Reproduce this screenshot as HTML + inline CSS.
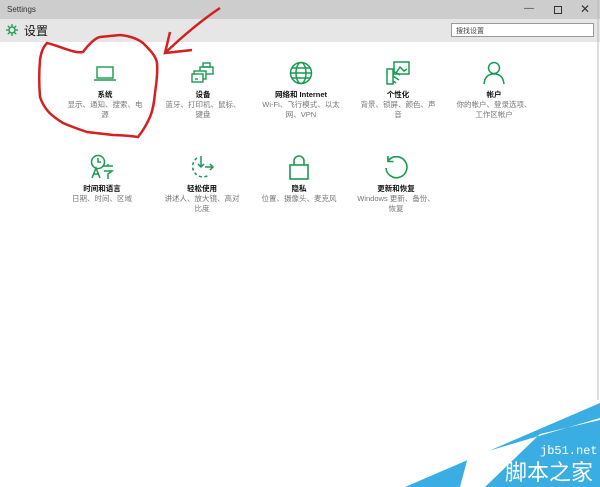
<!DOCTYPE html>
<html><head><meta charset="utf-8"><style>
*{margin:0;padding:0;box-sizing:border-box}
body{width:600px;height:487px;overflow:hidden;background:#fff;font-family:"Liberation Sans","Noto Sans CJK SC",sans-serif;position:relative}
.tb{position:absolute;left:0;top:0;width:600px;height:19px;background:#cdcdcd;font-size:8px;color:#333}
.hb{position:absolute;left:0;top:19px;width:600px;height:23px;background:#e6e6e6}
.tile{position:absolute;width:96px;text-align:center}
.tile svg{display:block;margin:0 auto}
.t{font-size:7.5px;color:#111;margin-top:6px;font-weight:bold}
.d{font-size:7.5px;color:#777;line-height:10px;width:78px;margin:0 auto}
</style></head><body>
<div class="tb"><span style="position:absolute;left:7px;top:5px">Settings</span>
<span style="position:absolute;left:524px;top:3px;font-size:10px;color:#444">—</span>
<div style="position:absolute;left:554px;top:6px;width:8px;height:8px;border:1px solid #333"></div>
<span style="position:absolute;left:580px;top:2px;font-size:12px;color:#333">✕</span></div>
<div class="hb">
<svg style="position:absolute;left:6px;top:5px" width="12" height="12" viewBox="0 0 12 12"><circle cx="6" cy="6" r="3" fill="none" stroke="#1a9a50" stroke-width="1.3"/><g stroke="#1a9a50" stroke-width="1.3"><line x1="6" y1="0" x2="6" y2="2.5"/><line x1="6" y1="9.5" x2="6" y2="12"/><line x1="0" y1="6" x2="2.5" y2="6"/><line x1="9.5" y1="6" x2="12" y2="6"/><line x1="1.8" y1="1.8" x2="3.5" y2="3.5"/><line x1="8.5" y1="8.5" x2="10.2" y2="10.2"/><line x1="1.8" y1="10.2" x2="3.5" y2="8.5"/><line x1="8.5" y1="3.5" x2="10.2" y2="1.8"/></g></svg>
<span style="position:absolute;left:24px;top:3px;font-size:12px;color:#111">设置</span>
<div style="position:absolute;left:451px;top:4px;width:143px;height:14px;background:#fff;border:1px solid #999;font-size:7px;color:#444;padding:2px 4px">搜找设置</div>
</div>

<div class="tile" style="left:57px;top:63px"><svg width="24" height="22" viewBox="0 0 24 22"><rect x="4" y="4" width="16" height="11" fill="none" stroke="#1a9a50" stroke-width="1.4"/><line x1="1" y1="17" x2="23" y2="17" stroke="#1a9a50" stroke-width="1.6"/></svg><div class="t" style="margin-top:4px">系统</div><div class="d">显示、通知、搜索、电源</div></div>
<div class="tile" style="left:155px;top:62px"><svg width="24" height="22" viewBox="0 0 24 22" fill="none" stroke="#1a9a50" stroke-width="1.4"><rect x="12" y="1" width="7" height="4"/><rect x="9" y="5" width="13" height="7"/><rect x="3" y="9" width="12" height="8" fill="#fff"/><rect x="1" y="12" width="11" height="8" fill="#fff"/><line x1="4" y1="17" x2="7" y2="17"/></svg><div class="t" style="margin-top:5px">设备</div><div class="d">蓝牙、打印机、鼠标、键盘</div></div>
<div class="tile" style="left:253px;top:61px"><svg width="24" height="24" viewBox="0 0 24 24" fill="none" stroke="#1a9a50" stroke-width="1.5"><circle cx="12" cy="12" r="10.5"/><ellipse cx="12" cy="12" rx="5" ry="10.5"/><line x1="1.5" y1="12" x2="22.5" y2="12"/><line x1="3" y1="7" x2="21" y2="7"/><line x1="3" y1="17" x2="21" y2="17"/></svg><div class="t" style="margin-top:4px">网络和 Internet</div><div class="d">Wi-Fi、飞行模式、以太网、VPN</div></div>
<div class="tile" style="left:350px;top:61px"><svg width="24" height="24" viewBox="0 0 24 24" fill="none" stroke="#1a9a50" stroke-width="1.5"><rect x="8" y="1" width="15" height="12"/><path d="M10 12 L14 6 L18 10 L21 8"/><rect x="1" y="8" width="6" height="15"/><path d="M7 10 L14 14 M7 15 L13 19 M7 20 L10 22"/></svg><div class="t" style="margin-top:4px">个性化</div><div class="d">背景、锁屏、颜色、声音</div></div>
<div class="tile" style="left:446px;top:61px"><svg width="24" height="24" viewBox="0 0 24 24" fill="none" stroke="#1a9a50" stroke-width="1.5"><circle cx="12" cy="7" r="5.5"/><path d="M2 23 Q3 13 12 13 Q21 13 22 23"/></svg><div class="t" style="margin-top:4px">帐户</div><div class="d">你的帐户、登录选项、工作区帐户</div></div>

<div class="tile" style="left:54px;top:154px"><svg width="26" height="26" viewBox="0 0 26 26" fill="none" stroke="#1a9a50" stroke-width="1.5"><circle cx="9" cy="8" r="6.5"/><path d="M9 4 V8 H12"/><path d="M3 24 L7 14 L11 24 M4.5 20 H9.5"/><path d="M14 12 H24 M19 10 V12 M15 17 H23 L19 20 V25"/></svg><div class="t" style="margin-top:3px">时间和语言</div><div class="d">日期、时间、区域</div></div>
<div class="tile" style="left:154px;top:155px"><svg width="26" height="24" viewBox="0 0 26 24" fill="none" stroke="#1a9a50" stroke-width="1.5"><path d="M8 3 A10 10 0 1 0 20 20" stroke-dasharray="3 2.5"/><path d="M12 1 V12 M9 9 L12 12 L15 9"/><path d="M16 12 H24 M21 9 L24 12 L21 15"/></svg><div class="t" style="margin-top:4px">轻松使用</div><div class="d">讲述人、放大镜、高对比度</div></div>
<div class="tile" style="left:251px;top:154px"><svg width="24" height="26" viewBox="0 0 24 26" fill="none" stroke="#1a9a50" stroke-width="1.6"><path d="M7 11 V7 A5 5 0 0 1 17 7 V11"/><rect x="3" y="11" width="18" height="14"/></svg><div class="t" style="margin-top:3px">隐私</div><div class="d">位置、摄像头、麦克风</div></div>
<div class="tile" style="left:348px;top:155px"><svg width="26" height="26" viewBox="0 0 26 26" fill="none" stroke="#1a9a50" stroke-width="1.6"><path d="M5 6 A10.5 10.5 0 1 1 3 13"/><path d="M5 1 V6.5 H10.5"/></svg><div class="t" style="margin-top:2px">更新和恢复</div><div class="d">Windows 更新、备份、恢复</div></div>

<svg style="position:absolute;left:0;top:0" width="600" height="487">
<path d="M47 43 C60 46 75 54 83 52 C88 45 95 38 100 37 L120 35 C130 36 138 39 143 43 C150 50 156 56 157 63 C158 75 156 85 155 93 C154 103 153 110 150 117 C146 126 142 132 138 137 C130 136 120 135 113 135 L87 132 C78 129 70 126 63 123 C55 118 50 114 47 110 C43 105 41 100 40 97 C39 85 39 72 40 60 C41 52 44 46 47 43 Z" fill="none" stroke="#d42020" stroke-width="2.5"/>
<path d="M220 8 C205 18 185 34 165 53 M170 32 L165 53 L192 50" fill="none" stroke="#d42020" stroke-width="2.5"/>
<polygon points="405,487 600,403 600,487" fill="#3aaee2"/>
<polygon points="460,487 468,457 600,418 600,420 540,434 485,487" fill="#fff"/>
<line x1="598" y1="0" x2="598" y2="400" stroke="#bbb"/>
</svg>
<div style="position:absolute;left:540px;top:444px;font-family:'Liberation Mono',monospace;font-size:12px;color:#fff">jb51.net</div>
<div style="position:absolute;left:505px;top:459px;font-size:22px;line-height:24px;color:#fff;font-family:'Noto Sans CJK SC',sans-serif">脚本之家</div>
</body></html>
